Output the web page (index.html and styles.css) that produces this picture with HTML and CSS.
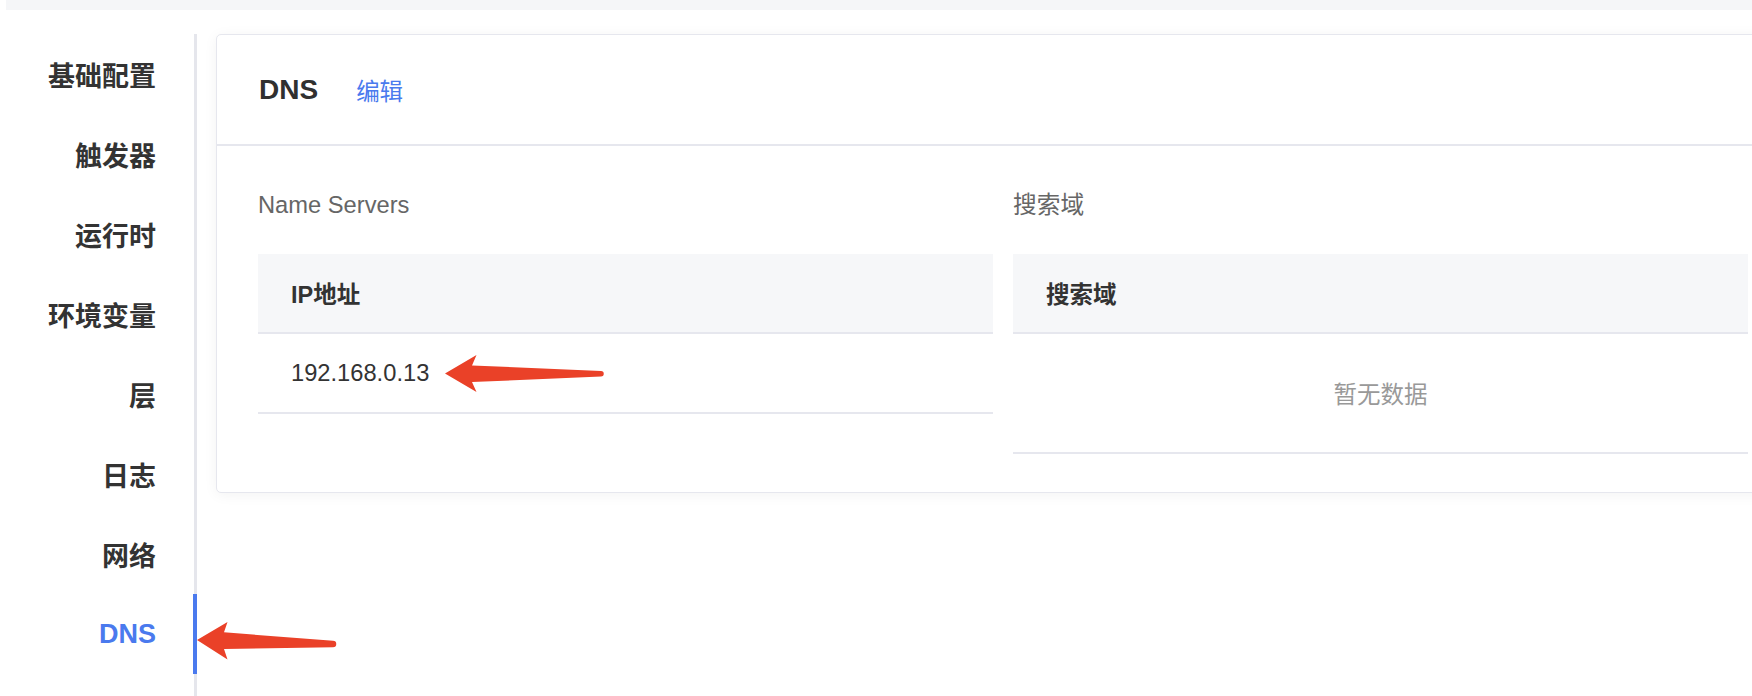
FILE: index.html
```html
<!DOCTYPE html>
<html lang="zh-CN">
<head>
<meta charset="utf-8">
<title>DNS</title>
<link rel="stylesheet" href="styles.css">
</head>
<body>
<div class="page">
  <div class="topbar"></div>
  <div class="layout">
    <nav class="sidenav">
      <a class="nav-item">基础配置</a>
      <a class="nav-item">触发器</a>
      <a class="nav-item">运行时</a>
      <a class="nav-item">环境变量</a>
      <a class="nav-item">层</a>
      <a class="nav-item">日志</a>
      <a class="nav-item">网络</a>
      <a class="nav-item active">DNS</a>
    </nav>
    <main class="content">
      <section class="card">
        <header class="card-header">
          <h2 class="card-title">DNS</h2>
          <a class="edit-link">编辑</a>
        </header>
        <div class="card-body">
          <div class="column">
            <div class="section-label">Name Servers</div>
            <div class="table">
              <div class="table-head"><span class="th">IP地址</span></div>
              <div class="table-row"><span class="td">192.168.0.13</span></div>
            </div>
          </div>
          <div class="column">
            <div class="section-label">搜索域</div>
            <div class="table">
              <div class="table-head"><span class="th">搜索域</span></div>
              <div class="table-empty">暂无数据</div>
            </div>
          </div>
        </div>
      </section>
    </main>
  </div>
  <svg class="annotations" width="1752" height="696" viewBox="0 0 1752 696" xmlns="http://www.w3.org/2000/svg">
    <path d="M445 373.5 L476.5 355 L472 365.5 L601 371 A2.6 2.6 0 0 1 601 376.5 L472 382 L476.5 392 Z" fill="#ea4128"/>
    <path d="M197 640 L227.5 622 L224 632.3 L333 640.8 A3.2 3.2 0 0 1 333 647.3 L224 649 L227.5 659.5 Z" fill="#ea4128"/>
  </svg>
</div>
</body>
</html>
```
FILE: styles.css
```css
* {
  box-sizing: border-box;
}

html, body {
  margin: 0;
  padding: 0;
  background: #ffffff;
}

body {
  font-family: "Liberation Sans", "Noto Sans CJK SC", sans-serif;
  color: #333333;
  overflow: hidden;
}

.page {
  position: relative;
  width: 1752px;
  height: 696px;
  overflow: hidden;
}

.topbar {
  height: 10px;
  margin-left: 6px;
  background: #f5f6f8;
}

.layout {
  display: flex;
  margin-top: 24px;
  height: 662px;
}

.sidenav {
  width: 197px;
  flex-shrink: 0;
  display: flex;
  flex-direction: column;
  border-right: 3px solid #e5e6ec;
}

.nav-item {
  height: 80px;
  display: flex;
  align-items: center;
  justify-content: flex-end;
  padding-right: 37px;
  margin-right: -3px;
  border-right: 4px solid transparent;
  font-size: 27px;
  font-weight: 600;
  color: #333333;
  text-decoration: none;
  white-space: nowrap;
}

.nav-item.active {
  color: #4a7aee;
  font-weight: 700;
  border-right-color: #4a7aee;
}

.content {
  padding-left: 19px;
  flex-shrink: 0;
}

.card {
  width: 1576px;
  background: #ffffff;
  border: 1px solid #e6e7ee;
  border-radius: 5px;
  box-shadow: 0 2px 14px rgba(0, 0, 0, 0.05);
}

.card-header {
  height: 111px;
  display: flex;
  align-items: center;
  padding: 0 42px;
  border-bottom: 2px solid #e6e7ee;
}

.card-title {
  margin: 0;
  font-size: 28px;
  font-weight: 700;
  color: #303030;
}

.edit-link {
  margin-left: 38px;
  font-size: 23.5px;
  color: #4a7aee;
  cursor: pointer;
}

.card-body {
  display: grid;
  grid-template-columns: 735px 735px;
  column-gap: 20px;
  padding: 47px 41px 38px;
}

.section-label {
  font-size: 23.7px;
  line-height: 24px;
  color: #666666;
  margin-bottom: 37px;
}

.table-head {
  height: 80px;
  display: flex;
  align-items: center;
  padding-left: 33px;
  background: #f6f7f9;
  border-bottom: 2px solid #e6e7ee;
}

.th {
  font-size: 23.5px;
  font-weight: 700;
  color: #333333;
}

.table-row {
  height: 80px;
  display: flex;
  align-items: center;
  padding-left: 33px;
  border-bottom: 2px solid #e6e7ee;
}

.td {
  font-size: 23.7px;
  color: #333333;
}

.table-empty {
  height: 120px;
  display: flex;
  align-items: center;
  justify-content: center;
  font-size: 23.5px;
  color: #999999;
  border-bottom: 2px solid #e6e7ee;
}

.annotations {
  position: absolute;
  left: 0;
  top: 0;
  pointer-events: none;
}
```
